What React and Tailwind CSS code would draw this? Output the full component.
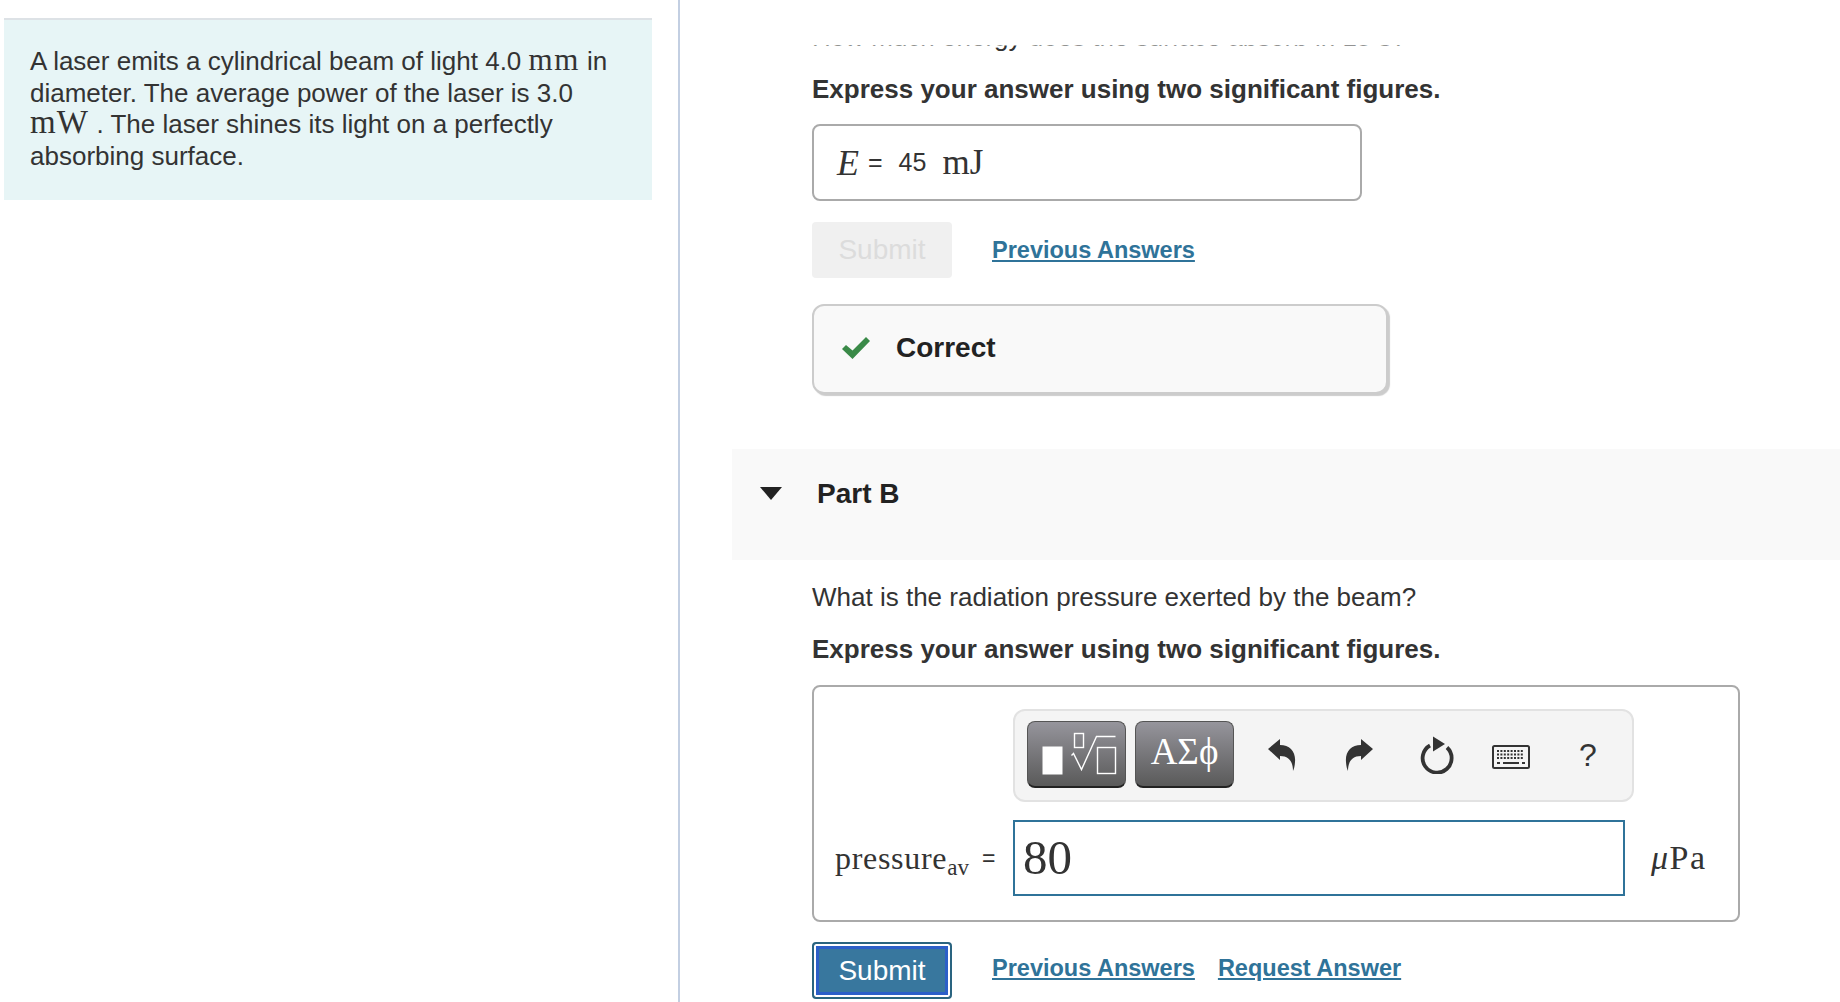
const sans = "font-['Liberation_Sans',Arial,sans-serif]";
const serif = "font-['Liberation_Serif','Times_New_Roman',serif]";

function Undo({ flip }) {
  return (
    <svg width="30" height="34" viewBox="0 0 30 34" className={flip ? "-scale-x-100" : ""}>
      <path d="M1 11 L13 1 L13 7 C23 7 29 14 28 24 C27.8 28 27 31 26 33 C26 25 23 18 13 18 L13 22 Z" fill="#333" />
    </svg>
  );
}

function Reset() {
  return (
    <svg width="36" height="38" viewBox="0 0 36 38">
      <path d="M12 9.5 A14.5 14.5 0 1 0 29 11.5" fill="none" stroke="#333" strokeWidth="3.8" />
      <path d="M15 0.5 L27 8 L15 15.5 Z" fill="#333" />
    </svg>
  );
}

function Keyboard() {
  return (
    <svg width="38" height="24" viewBox="0 0 38 24">
      <rect x="1" y="1" width="36" height="22" rx="1.5" fill="#f4f4f4" stroke="#333" strokeWidth="2" />
      <path d="M5 6h27M5 9.5h27M5 13h27" stroke="#333" strokeWidth="2" strokeDasharray="2 1.4" />
      <path d="M5 18h3M11 18h16M30 18h3" stroke="#333" strokeWidth="2" />
    </svg>
  );
}

function Toolbar() {
  const btn = "h-[67px] w-[99px] rounded-lg border border-[#555] border-b-2 border-b-[#222] bg-gradient-to-b from-[#96959c] to-[#5a5a5a] flex items-center justify-center";
  return (
    <div className="ml-[199px] h-[93px] w-[621px] rounded-xl border-2 border-[#e2e2e2] bg-[#f4f4f4] flex items-center pl-[12px] pb-[2px]">
      <div className={btn}>
        <svg width="80" height="50" viewBox="0 0 80 50">
          <rect x="5.5" y="17.5" width="20" height="28" fill="#fff" />
          <rect x="37.5" y="4.5" width="9" height="14" fill="none" stroke="#fff" strokeWidth="1.4" />
          <path d="M34.5 26.5 L36.5 24.5 L44.5 40.5 L59.5 7.5 L78.5 7.5" fill="none" stroke="#fff" strokeWidth="1.4" />
          <rect x="60.5" y="18.5" width="18" height="26" fill="none" stroke="#fff" strokeWidth="1.4" />
        </svg>
      </div>
      <div className={`${btn} ml-[9px] text-white text-[37px] ${serif}`}>
        <span className="-mt-1">ΑΣϕ</span>
      </div>
      <div className="ml-[33px] w-[30px] flex justify-center"><Undo /></div>
      <div className="ml-[47px] w-[30px] flex justify-center"><Undo flip /></div>
      <div className="ml-[44px] w-[36px] flex justify-center"><Reset /></div>
      <div className="ml-[38px] w-[38px] flex justify-center mt-1"><Keyboard /></div>
      <div className={`ml-[48px] w-[20px] text-center text-[32px] leading-none text-[#333] ${sans}`}>?</div>
    </div>
  );
}

function Links({ children }) {
  return <a className="text-[#2f7399] font-bold text-[23.5px] leading-[28px] underline decoration-2 underline-offset-2">{children}</a>;
}

export default function App() {
  return (
    <div className={`${sans} h-[1002px] w-[1840px] overflow-hidden bg-white flex text-[#333]`}>
      <div className="w-[680px] shrink-0 border-r-2 border-[#c3cfe2] pt-[18px] pl-[4px]">
        <div className="w-[648px] h-[182px] bg-[#e7f5f6] border-t-2 border-[#dde2e6] pl-[26px] pr-[20px] pt-[26px] text-[26px] leading-[31.7px]">
          A laser emits a cylindrical beam of light 4.0 <span className={`${serif} text-[31px] leading-[0] tracking-[1.5px]`}>mm</span> in diameter. The average power of the laser is 3.0 <span className={`${serif} text-[33px] leading-[0] tracking-[1.2px]`}>mW</span> . The laser shines its light on a perfectly absorbing surface.
        </div>
      </div>

      <div className="flex-1 min-w-0 pl-[52px]">
        <div className="pl-[80px]">
          <div className="h-[51px] overflow-hidden pt-[21px]">
            <div className="whitespace-nowrap text-[26px] leading-[32px] [clip-path:inset(24.5px_0_0_0)]">How much energy does the surface absorb in 15 s?</div>
          </div>
          <div className="mt-[24px] font-bold text-[26px] leading-[28px]">Express your answer using two significant figures.</div>
          <div className={`mt-[21px] w-[550px] h-[77px] rounded-lg border-2 border-[#aaa] flex items-center pl-[23px] text-[35px] ${serif}`}>
            <i className="mr-[9px] text-[36px] leading-none">E</i>
            <span className={`${sans} text-[25px] mr-[16px]`}>=</span>
            <span className={`${sans} text-[25px] mr-[16px]`}>45</span>
            <span className="leading-none">mJ</span>
          </div>
          <div className="mt-[21px] flex items-center">
            <div className="w-[140px] h-[56px] rounded bg-[#f0f0f0] text-[#dcdcdc] text-[28px] flex items-center justify-center">Submit</div>
            <div className="ml-[40px]"><Links>Previous Answers</Links></div>
          </div>
          <div className="mt-[26px] w-[576px] h-[90px] rounded-xl border-2 border-[#ccc] bg-[#f9f9f9] shadow-[2px_2px_1px_#ccc] flex items-center pl-[27px] pb-[2px]">
            <svg width="30" height="24" viewBox="0 0 30 24">
              <path d="M1 13 L5 9 L11.5 14.5 L25 1 L29 5 L11.5 23 Z" fill="#3a8a48" />
            </svg>
            <span className="ml-[25px] font-bold text-[28px] text-[#222]">Correct</span>
          </div>
        </div>

        <div className="mt-[55px] h-[111px] bg-[#f9f9f9] flex items-center pl-[28px] pb-[22px]">
          <svg width="22" height="13" viewBox="0 0 22 13">
            <path d="M0 0 H22 L11 13 Z" fill="#222" />
          </svg>
          <span className="ml-[35px] font-bold text-[28px] text-[#222]">Part B</span>
        </div>

        <div className="pl-[80px]">
          <div className="mt-[23px] text-[26px] leading-[28px]">What is the radiation pressure exerted by the beam?</div>
          <div className="mt-[24px] font-bold text-[26px] leading-[28px]">Express your answer using two significant figures.</div>
          <div className="mt-[22px] w-[928px] h-[237px] rounded-lg border-2 border-[#aaa] pt-[22px]">
            <Toolbar />
            <div className="mt-[18px] flex items-center pl-[21px]">
              <span className={`${serif} text-[32px] leading-none tracking-[0.7px] w-[136px] whitespace-nowrap`}>pressure<sub className="text-[23px] tracking-normal">av</sub></span>
              <span className="text-[23px] w-[31px] ml-[11px]">=</span>
              <div className={`w-[612px] h-[76px] border-2 border-[#2f7399] pl-[8px] flex items-center text-[49px] ${serif}`}>80</div>
              <span className={`${serif} text-[34px] leading-none tracking-[1.5px] ml-[26px]`}><i>μ</i>Pa</span>
            </div>
          </div>
          <div className="mt-[20px] flex items-center">
            <div className="w-[140px] h-[57px] rounded bg-[#38779e] border-2 border-[#2a6480] shadow-[inset_0_0_0_2px_#fff,inset_0_0_0_5px_#2c5fc8] text-white text-[28px] flex items-center justify-center">Submit</div>
            <div className="ml-[40px] -mt-[4px]"><Links>Previous Answers</Links></div>
            <div className="ml-[23px] -mt-[4px]"><Links>Request Answer</Links></div>
          </div>
        </div>
      </div>
    </div>
  );
}
